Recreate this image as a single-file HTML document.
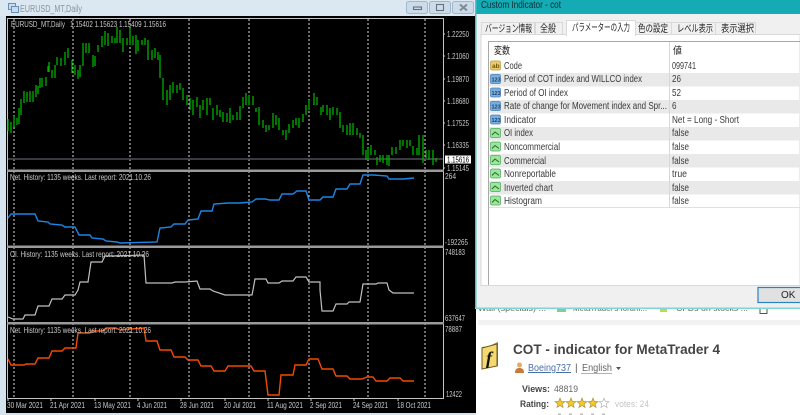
<!DOCTYPE html>
<html><head><meta charset="utf-8"><style>
html,body{margin:0;padding:0;background:#fff;overflow:hidden}
svg{display:block;filter:blur(.3px)}
.c{font-family:"Liberation Sans",sans-serif;font-size:8.5px;fill:#c8c8c8}
.t{font-family:"Liberation Sans","Noto Sans CJK JP",sans-serif;font-size:10px;fill:#3a3a3a}
.j{font-family:"Liberation Sans","Noto Sans CJK JP",sans-serif;font-size:10px;fill:#222}
.w{font-family:"Liberation Sans",sans-serif}
</style></head><body>
<svg width="800" height="415" viewBox="0 0 800 415" xmlns="http://www.w3.org/2000/svg">
<rect width="800" height="415" fill="#fff"/>
<!-- MT4 window -->
<rect x="0" y="0" width="476" height="415" fill="#d5e3ef"/>
<rect x="0" y="0" width="476" height="16" fill="#dbe7f1"/>
<rect x="6" y="16" width="470" height="397" fill="#000"/>
<rect x="0" y="413" width="476" height="2" fill="#d5e3ef"/>
<g fill="none" stroke="#6a8fb5" stroke-width="1">
<rect x="8.5" y="3.5" width="7" height="6" fill="#c5dcf0"/><rect x="11.5" y="6.5" width="7" height="6" fill="#c5dcf0"/>
</g>
<text class="w" x="20" y="12" font-size="10" fill="#8e959c" textLength="62" lengthAdjust="spacingAndGlyphs">EURUSD_MT,Daily</text>
<g fill="#ccdbe9" stroke="#a3b7ca"><rect x="406.5" y="1.5" width="21" height="12" rx="2"/><rect x="429.5" y="1.5" width="21" height="12" rx="2"/><rect x="452.5" y="1.5" width="21" height="12" rx="2"/></g>
<g fill="none" stroke="#66727e" stroke-width="1.1"><rect x="413.5" y="7" width="8" height="2.5"/><rect x="436.5" y="4.5" width="7" height="6"/><path d="M460 4.5l7 6M467 4.5l-7 6" stroke-width="2" stroke="#7f8a95"/></g>
<!-- frames -->
<g fill="none" stroke="#c4c4c4" stroke-width="1"><path d="M7.5 18.5H443.5V398.5H7.5Z"/></g>
<g stroke="#fff" stroke-width="1" stroke-dasharray="2 2" opacity=".85">
<path d="M14 19V398M73 19V398M130 19V398M189 19V398M249 19V398M309 19V398M368 19V398M425 19V398"/>
</g>
<path d="M8 159H443" stroke="#4a4f55" stroke-width="1.4"/>
<!-- green bars -->
<path fill="none" stroke="#00b000" stroke-width="1.3" d="M8 119V131M11 122V133M14 116V127M17 118V125M19 108V124M21 99V115M24 91V103M27 92V102M30 91V102M33 91V102M36 85V97M38 86V94M40 78V88M42 78V87M46 77V86M48 66V72M49 62V72M52 70V78M55 65V78M57 57V65M61 58V66M65 52V65M68 48V58M72 60V73M75 65V75M78 70V79M80 65V77M83 43V66M86 43V53M89 43V53M93 55V67M95 56V66M98 45V52M102 36V47M105 31V45M108 33V46M112 36V43M115 38V43M117 27V43M120 30V43M123 38V52M127 38V45M130 28V45M133 36V45M136 35V54M138 40V51M142 40V45M145 38V45M148 40V60M152 50V60M155 48V58M158 52V60M160 55V78M163 78V100M167 90V105M170 85V100M173 82V93M177 85V93M180 83V90M183 88V100M187 95V105M190 98V110M193 100V115M197 97V107M200 105V118M203 100V110M207 98V115M210 98V105M213 108V120M217 105V115M220 110V117M223 112V122M227 113V122M230 108V123M233 115V120M237 112V120M240 106V120M243 97V108M246 93V105M249 95V105M253 96V105M256 108V112M259 107V125M263 120V128M266 125V132M269 125V130M273 113V128M276 115V125M279 118V130M283 130V135M286 130V140M289 124V133M293 120V128M296 118V125M299 118V128M303 114V122M306 105V115M309 100V110M314 93V105M317 97V105M321 107V115M323 105V112M327 105V115M330 108V120M333 107V115M337 108V115M340 112V128M343 125V132M347 125V135M350 123V135M353 123V135M357 128V135M360 133V138M363 135V155M366 150V160M368 148V160M371 145V155M375 150V155M377 157V165M380 155V162M383 155V163M387 155V165M389 155V166M392 147V155M396 147V154M400 140V150M403 140V146M407 140V148M410 140V146M413 146V155M417 148V155M419 135V155M423 135V163M426 150V158M429 150V160M433 150V165M436 158V162"/>
<!-- separators -->
<g fill="#9a9a9a"><rect x="7" y="169.500" width="437" height="2.500"/><rect x="7" y="245.500" width="437" height="2.500"/><rect x="7" y="322" width="437" height="2.500"/></g>
<!-- lines -->
<polyline fill="none" stroke="#1b86e6" stroke-width="1.4" points="8,218 11,214 13,214 35,214 38,221 48,222 50,224 62,225 65,227 75,227 79,235 90,235 92,238 103,239 106,241 117,242 120,243 157,242 160,228 171,227 174,224 185,224 188,220 198,219 201,211 212,211 214,204 228,203 240,203 252,202 256,199 265,199 270,200 279,200 282,194 293,194 297,191 306,191 309,200 320,200 323,197 333,197 336,189 347,189 350,184 360,184 363,175 373,175 387,176 389,179 403,179 414,178"/>
<polyline fill="none" stroke="#c0c0c0" stroke-width="1.2" points="8,317 13,319 23,319 25,315 35,315 38,306 49,306 52,299 62,299 65,295 75,295 78,290 80,282 88,282 91,262 102,262 105,256 112,256 144,255 146,283 172,283 175,282 185,282 197,281 200,289 210,289 213,291 225,295 240,295 252,295 253,290 255,279 266,279 268,283 279,283 282,281 293,281 296,277 306,277 309,282 320,282 320,290 322,311 333,311 336,304 347,304 349,302 360,302 362,290 363,284 376,284 378,283 387,283 389,290 393,293 403,293 414,293"/>
<polyline fill="none" stroke="#f24a00" stroke-width="1.4" points="8,359 11,365 24,365 26,364 35,364 38,358 49,358 52,351 62,351 65,348 76,348 78,333 90,333 92,331 103,331 106,328 116,328 120,330 130,329 144,328 146,341 157,341 160,350 171,350 174,357 185,357 188,360 198,360 201,366 211,366 214,371 225,371 228,366 240,366 251,366 254,371 265,371 268,395 279,395 281,375 293,375 295,365 306,365 309,359 318,359 322,369 333,369 336,376 347,376 350,379 362,379 367,377 373,377 376,381 387,381 390,378 400,378 403,381 414,381"/>
<!-- chart labels -->
<text class="c" x="11" y="27" textLength="155" lengthAdjust="spacingAndGlyphs" xml:space="preserve">EURUSD_MT,Daily   1.15402 1.15623 1.15409 1.15616</text>
<text class="c" x="10" y="180" textLength="141" lengthAdjust="spacingAndGlyphs">Net. History: 1135 weeks. Last report: 2021.10.26</text>
<text class="c" x="10" y="257" textLength="139" lengthAdjust="spacingAndGlyphs">OI. History: 1135 weeks. Last report: 2021.10.26</text>
<text class="c" x="10" y="333" textLength="141" lengthAdjust="spacingAndGlyphs">Net. History: 1135 weeks. Last report: 2021.10.26</text>
<text class="c" x="447" y="37" textLength="22" lengthAdjust="spacingAndGlyphs">1.22250</text>
<text class="c" x="447" y="59" textLength="22" lengthAdjust="spacingAndGlyphs">1.21060</text>
<text class="c" x="447" y="82" textLength="22" lengthAdjust="spacingAndGlyphs">1.19870</text>
<text class="c" x="447" y="104" textLength="22" lengthAdjust="spacingAndGlyphs">1.18680</text>
<text class="c" x="447" y="126" textLength="22" lengthAdjust="spacingAndGlyphs">1.17525</text>
<text class="c" x="447" y="148" textLength="22" lengthAdjust="spacingAndGlyphs">1.16335</text>
<text class="c" x="447" y="171" textLength="22" lengthAdjust="spacingAndGlyphs">1.15145</text>
<text class="c" x="445" y="179" textLength="11" lengthAdjust="spacingAndGlyphs">264</text>
<text class="c" x="445" y="245" textLength="23" lengthAdjust="spacingAndGlyphs">-192265</text>
<text class="c" x="445" y="255" textLength="20" lengthAdjust="spacingAndGlyphs">748183</text>
<text class="c" x="445" y="321" textLength="20" lengthAdjust="spacingAndGlyphs">637647</text>
<text class="c" x="445" y="332" textLength="17" lengthAdjust="spacingAndGlyphs">78887</text>
<text class="c" x="446" y="397" textLength="16" lengthAdjust="spacingAndGlyphs">12422</text>
<rect x="445" y="155.500" width="26" height="8" fill="#fff"/>
<text x="447" y="162.500" font-family="Liberation Sans" font-size="8.500" fill="#000" textLength="22" lengthAdjust="spacingAndGlyphs">1.15616</text>
<g stroke="#c8c8c8"><path d="M443 34h2M443 56h2M443 79h2M443 101h2M443 123h2M443 145h2M443 168h2M8 398v3M51 398v3M95 398v3M138 398v3M181 398v3M225 398v3M268 398v3M311 398v3M354 398v3M398 398v3"/></g>
<text class="c" x="7" y="408" textLength="36" lengthAdjust="spacingAndGlyphs">30 Mar 2021</text>
<text class="c" x="50" y="408" textLength="35" lengthAdjust="spacingAndGlyphs">21 Apr 2021</text>
<text class="c" x="94" y="408" textLength="37" lengthAdjust="spacingAndGlyphs">13 May 2021</text>
<text class="c" x="137" y="408" textLength="30" lengthAdjust="spacingAndGlyphs">4 Jun 2021</text>
<text class="c" x="180" y="408" textLength="34" lengthAdjust="spacingAndGlyphs">28 Jun 2021</text>
<text class="c" x="224" y="408" textLength="32" lengthAdjust="spacingAndGlyphs">20 Jul 2021</text>
<text class="c" x="267" y="408" textLength="36" lengthAdjust="spacingAndGlyphs">11 Aug 2021</text>
<text class="c" x="310" y="408" textLength="32" lengthAdjust="spacingAndGlyphs">2 Sep 2021</text>
<text class="c" x="353" y="408" textLength="35" lengthAdjust="spacingAndGlyphs">24 Sep 2021</text>
<text class="c" x="397" y="408" textLength="34" lengthAdjust="spacingAndGlyphs">18 Oct 2021</text>
<!-- web page beneath -->
<rect x="476" y="309" width="324" height="106" fill="#fff"/>
<text class="w" x="478" y="311" font-size="8" fill="#666" textLength="68" lengthAdjust="spacingAndGlyphs">Wall (specials) ...</text>
<rect x="557" y="308" width="9" height="4" fill="#7ed08a"/>
<text class="w" x="573" y="311" font-size="8" fill="#666" textLength="74" lengthAdjust="spacingAndGlyphs">MetaTrader's forum...</text>
<rect x="660" y="308" width="7" height="4" fill="#b8dc50"/>
<text class="w" x="676" y="311" font-size="8" fill="#666" textLength="72" lengthAdjust="spacingAndGlyphs">CFDs on stocks ...</text>
<rect x="760" y="308.500" width="7" height="5" fill="#fff" stroke="#555"/>
<rect x="478" y="320" width="322" height="5" fill="#f2f2f2"/>
<g>
<path d="M489 346l9-4 0 24-16 3 0-22z" fill="#8a7a40"/>
<path d="M482 348l15-4 0 22-15 3z" fill="#f4d870" stroke="#6c5a20" stroke-width="1"/>
<text x="486" y="364" font-family="Liberation Serif" font-style="italic" font-weight="bold" font-size="18" fill="#111">f</text>
</g>
<text class="w" x="513" y="354" font-size="14" font-weight="bold" fill="#444" textLength="207" lengthAdjust="spacingAndGlyphs">COT - indicator for MetaTrader 4</text>
<circle cx="519.500" cy="365" r="2.500" fill="#e8a860"/><path d="M515 373c0-4 2-5 4.500-5s4.500 1 4.500 5z" fill="#c87838"/>
<text class="w" x="528" y="371" font-size="10" fill="#4a6ea8" textLength="43" lengthAdjust="spacingAndGlyphs" text-decoration="underline">Boeing737</text>
<text class="w" x="575" y="371" font-size="10" fill="#555">|</text>
<text class="w" x="582" y="371" font-size="10" fill="#666" textLength="30" lengthAdjust="spacingAndGlyphs">English</text>
<path d="M581 373.500H612" stroke="#999" stroke-width=".7"/>
<path d="M616 367h5l-2.500 3z" fill="#555"/>
<text class="w" x="522" y="392" font-size="9.500" font-weight="bold" fill="#444" textLength="28" lengthAdjust="spacingAndGlyphs">Views:</text>
<text class="w" x="554" y="392" font-size="9.500" fill="#666" textLength="24" lengthAdjust="spacingAndGlyphs">48819</text>
<text class="w" x="520" y="407" font-size="9.500" font-weight="bold" fill="#444" textLength="29" lengthAdjust="spacingAndGlyphs">Rating:</text>
<defs><polygon id="s" points="5,0 6.300,3.400 10,3.600 7.100,5.900 8.100,9.500 5,7.500 1.900,9.500 2.900,5.900 0,3.600 3.700,3.400"/></defs>
<g fill="#f3c930" stroke="#a8872a" stroke-width=".6">
<use href="#s" x="555" y="398"/><use href="#s" x="566" y="398"/><use href="#s" x="577" y="398"/><use href="#s" x="588" y="398"/>
<use href="#s" x="599" y="398" fill="#fff" stroke="#aaa"/>
</g>
<g fill="#bbb"><rect x="558" y="413.500" width="3" height="2"/><rect x="569" y="413.500" width="3" height="2"/><rect x="580" y="413.500" width="3" height="2"/><rect x="591" y="413.500" width="3" height="2"/><rect x="602" y="413.500" width="3" height="2"/></g>
<text class="w" x="615" y="407" font-size="9" fill="#c4c4c4" textLength="34" lengthAdjust="spacingAndGlyphs">votes: 24</text>
<!-- dialog -->
<rect x="475" y="0" width="325" height="308.500" fill="#f0f0f0"/>
<rect x="475" y="0" width="325" height="14" fill="#15abb5"/>
<rect x="475" y="0" width="1.500" height="308.500" fill="#4cc0c6"/>
<rect x="475" y="307.500" width="325" height="1.500" fill="#7fd4d8"/>
<text class="w" x="481" y="8" font-size="10" fill="#0c2c30" textLength="80" lengthAdjust="spacingAndGlyphs">Custom Indicator - cot</text>
<!-- tab pane -->
<rect x="481" y="34.500" width="319" height="251" fill="#fff" stroke="#d9d9d9"/>
<g fill="#f0f0f0" stroke="#d9d9d9"><rect x="481.500" y="22.500" width="53" height="12"/><rect x="535.500" y="22.500" width="27" height="12"/><rect x="633.500" y="22.500" width="38" height="12"/><rect x="671.500" y="22.500" width="44" height="12"/><rect x="715.500" y="22.500" width="40" height="12"/></g>
<rect x="566.500" y="20.500" width="69" height="15" fill="#fff" stroke="#d9d9d9"/><rect x="567" y="33" width="68" height="3" fill="#fff"/>
<text class="j" x="485" y="32" textLength="47" lengthAdjust="spacingAndGlyphs">バージョン情報</text>
<text class="j" x="540" y="32" textLength="16" lengthAdjust="spacingAndGlyphs">全般</text>
<text class="j" x="572" y="31" textLength="58" lengthAdjust="spacingAndGlyphs">パラメーターの入力</text>
<text class="j" x="638" y="32" textLength="30" lengthAdjust="spacingAndGlyphs">色の設定</text>
<text class="j" x="677" y="32" textLength="36" lengthAdjust="spacingAndGlyphs">レベル表示</text>
<text class="j" x="721" y="32" textLength="33" lengthAdjust="spacingAndGlyphs">表示選択</text>
<!-- table -->
<g fill="#e9e9e9">
<rect x="489" y="73" width="311" height="13.500"/><rect x="489" y="100" width="311" height="13.500"/><rect x="489" y="127" width="311" height="13.500"/><rect x="489" y="154" width="311" height="13.500"/><rect x="489" y="181" width="311" height="13.500"/>
</g>
<path d="M800 41.500H488.500V285" fill="none" stroke="#a8a8a8"/>
<path d="M669.500 42V207" stroke="#d8d8d8"/>
<path d="M489 207.500H800" stroke="#e0e0e0"/>
<text class="j" x="494" y="54" textLength="16" lengthAdjust="spacingAndGlyphs">変数</text>
<text class="j" x="673" y="54" textLength="9" lengthAdjust="spacingAndGlyphs">値</text>
<!-- icons -->
<rect x="490.500" y="61" width="10" height="9" rx="1.500" fill="#eccc66" stroke="#b89a40" stroke-width=".7"/>
<text class="w" x="492" y="68" font-size="6.500" fill="#6a5410" font-weight="bold">ab</text>
<g fill="#77aee0" stroke="#4a7eb5" stroke-width=".7">
<rect x="490.500" y="74.500" width="10" height="9" rx="1.500"/><rect x="490.500" y="88" width="10" height="9" rx="1.500"/><rect x="490.500" y="101.500" width="10" height="9" rx="1.500"/><rect x="490.500" y="115" width="10" height="9" rx="1.500"/>
</g>
<g font-size="5.500" font-weight="bold" fill="#1f3f66" font-family="Liberation Sans">
<text x="491.500" y="81.500">123</text><text x="491.500" y="95">123</text><text x="491.500" y="108.500">123</text><text x="491.500" y="122">123</text>
</g>
<g fill="#9be69b" stroke="#4fa95a" stroke-width=".7">
<rect x="490.500" y="128.500" width="10" height="9" rx="1.500"/><rect x="490.500" y="142" width="10" height="9" rx="1.500"/><rect x="490.500" y="155.500" width="10" height="9" rx="1.500"/><rect x="490.500" y="169" width="10" height="9" rx="1.500"/><rect x="490.500" y="182.500" width="10" height="9" rx="1.500"/><rect x="490.500" y="196" width="10" height="9" rx="1.500"/>
</g>
<g fill="none" stroke="#1f6a2a" stroke-width="1">
<path d="M492 135l3-3 4 3"/><path d="M492 148.500l3-3 4 3"/><path d="M492 162l3-3 4 3"/><path d="M492 175.500l3-3 4 3"/><path d="M492 189l3-3 4 3"/><path d="M492 202.500l3-3 4 3"/>
</g>
<!-- table text -->
<g>
<text class="t" x="504" y="69" textLength="18" lengthAdjust="spacingAndGlyphs">Code</text>
<text class="t" x="504" y="82" textLength="138" lengthAdjust="spacingAndGlyphs">Period of COT index and WILLCO index</text>
<text class="t" x="504" y="96" textLength="64" lengthAdjust="spacingAndGlyphs">Period of OI index</text>
<text class="t" x="504" y="109" textLength="163" lengthAdjust="spacingAndGlyphs">Rate of change for Movement index and Spr...</text>
<text class="t" x="504" y="123" textLength="32" lengthAdjust="spacingAndGlyphs">Indicator</text>
<text class="t" x="504" y="136" textLength="29" lengthAdjust="spacingAndGlyphs">OI index</text>
<text class="t" x="504" y="150" textLength="56" lengthAdjust="spacingAndGlyphs">Noncommercial</text>
<text class="t" x="504" y="164" textLength="42" lengthAdjust="spacingAndGlyphs">Commercial</text>
<text class="t" x="504" y="177" textLength="52" lengthAdjust="spacingAndGlyphs">Nonreportable</text>
<text class="t" x="504" y="191" textLength="49" lengthAdjust="spacingAndGlyphs">Inverted chart</text>
<text class="t" x="504" y="204" textLength="38" lengthAdjust="spacingAndGlyphs">Histogram</text>
<text class="t" x="672" y="69" textLength="24" lengthAdjust="spacingAndGlyphs">099741</text>
<text class="t" x="672" y="82" textLength="9" lengthAdjust="spacingAndGlyphs">26</text>
<text class="t" x="672" y="96" textLength="9" lengthAdjust="spacingAndGlyphs">52</text>
<text class="t" x="672" y="109" textLength="4.500" lengthAdjust="spacingAndGlyphs">6</text>
<text class="t" x="672" y="123" textLength="67" lengthAdjust="spacingAndGlyphs">Net = Long - Short</text>
<text class="t" x="672" y="136" textLength="17" lengthAdjust="spacingAndGlyphs">false</text>
<text class="t" x="672" y="150" textLength="17" lengthAdjust="spacingAndGlyphs">false</text>
<text class="t" x="672" y="164" textLength="17" lengthAdjust="spacingAndGlyphs">false</text>
<text class="t" x="672" y="177" textLength="15" lengthAdjust="spacingAndGlyphs">true</text>
<text class="t" x="672" y="191" textLength="17" lengthAdjust="spacingAndGlyphs">false</text>
<text class="t" x="672" y="204" textLength="17" lengthAdjust="spacingAndGlyphs">false</text>
</g>
<!-- OK -->
<rect x="758" y="287.500" width="45" height="15" fill="#e1e1e1" stroke="#2b80c8" stroke-width="1.200"/>
<text class="w" x="781" y="298" font-size="10" fill="#222">OK</text>
</svg>
</body></html>
